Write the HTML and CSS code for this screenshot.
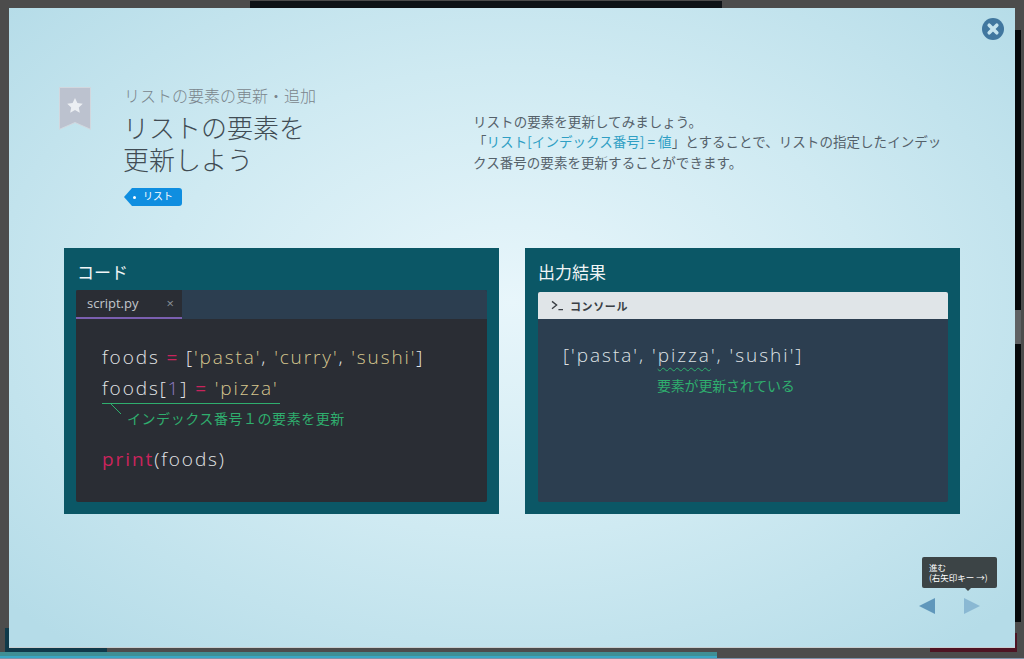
FILE: index.html

```html
<!DOCTYPE html>
<html lang="ja">
<head>
    <meta charset="UTF-8">
    <title>リストの要素を更新しよう</title>
    <link rel="stylesheet" href="styles.css">
</head>
<body>
    <!-- dimmed page behind the modal -->
    <div class="back-top"></div>
    <div class="back-right"></div>
    <div class="back-corner"></div>
    <div class="back-run"></div>
    <div class="back-progress"><div class="back-progress-fill"></div></div>

    <div class="modal">
        <svg class="close" viewBox="0 0 22 22">
            <circle cx="11" cy="11" r="11" fill="#41779f"/>
            <path d="M7.2 7.2l7.6 7.6M14.8 7.2l-7.6 7.6" stroke="#c4e3ee" stroke-width="3.6" stroke-linecap="round"/>
        </svg>

        <header class="head">
            <svg class="bookmark" viewBox="0 0 32 43">
                <path d="M.5.5h31v41.8l-15.500-6.800-15.500 6.800z" fill="#bcc2cf" stroke="#d2d7de"/>
                <path d="M16 11l2.400 5 5.400.7-4 3.700 1 5.400-4.800-2.700-4.800 2.700 1-5.400-4-3.700 5.400-.7z" fill="#eceff3"/>
            </svg>
            <div class="head-title">
                <p class="sub-title">リストの要素の更新・追加</p>
                <h1 class="title">リストの要素を<br>更新しよう</h1>
                <span class="tag"><i class="tag-dot"></i>リスト</span>
            </div>
            <p class="desc">
                リストの要素を更新してみましょう。<br>
                「<span class="desc-key">リスト[インデックス番号] = 値</span>」とすることで、リストの指定したインデッ<br>
                クス番号の要素を更新することができます。
            </p>
        </header>

        <div class="panels">
            <section class="panel">
                <h2 class="panel-title">コード</h2>
                <div class="editor">
                    <div class="tabs">
                        <div class="tab">script.py<span class="tab-close">×</span></div>
                    </div>
                    <div class="code">
                        <div class="line">foods <span class="red">=</span> [<span class="str">'pasta'</span>, <span class="str">'curry'</span>, <span class="str">'sushi'</span>]</div>
                        <div class="line line-mark">foods[<span class="num">1</span>] <span class="red">=</span> <span class="str">'pizza'</span></div>
                        <div class="note-code">
                            <svg class="note-tick" viewBox="0 0 12 12"><path d="M0 0l10 10" stroke="#2fae6e" stroke-width="1" fill="none"/></svg>
                            インデックス番号１の要素を更新
                        </div>
                        <div class="line"><span class="red">print</span>(foods)</div>
                    </div>
                </div>
            </section>

            <section class="panel">
                <h2 class="panel-title panel-title-output">出力結果</h2>
                <div class="console">
                    <div class="console-bar">
                        <svg class="prompt" viewBox="0 0 14 12"><path d="M1 1.500l5 4-5 4" stroke="#3a3f45" stroke-width="1.500" fill="none"/><path d="M8 10.500h5" stroke="#3a3f45" stroke-width="1.500"/></svg>
                        コンソール
                    </div>
                    <div class="output">
                        <div class="output-line">['pasta', '<span class="changed">pizza</span>', 'sushi']</div>
                        <div class="note-output">要素が更新されている</div>
                    </div>
                </div>
            </section>
        </div>

        <div class="tooltip">進む<br>(右矢印キー →)</div>
        <div class="nav">
            <span class="nav-prev"></span>
            <span class="nav-next"></span>
        </div>
    </div>
</body>
</html>
```

FILE: styles.css

```css
html, body {
    margin: 0;
    height: 100%;
}

body {
    position: relative;
    overflow: hidden;
    background-color: #4c4c4c;
    font-family: "Noto Sans CJK JP", "Noto Sans", sans-serif;
}

/* page behind the modal */
.back-top {
    position: absolute;
    left: 250px;
    top: 1px;
    width: 472px;
    height: 7px;
    background-color: #0e1317;
}

.back-right {
    position: absolute;
    left: 1015px;
    top: 30px;
    width: 6px;
    height: 592px;
    background: linear-gradient(#06090b 0, #06090b 280px, #5f6163 280px, #5f6163 314px, #06090b 314px);
}

.back-corner {
    position: absolute;
    left: 5px;
    top: 628px;
    width: 102px;
    height: 24px;
    background-color: #0f3a4a;
}

.back-run {
    position: absolute;
    left: 930px;
    top: 633px;
    width: 87px;
    height: 25px;
    background-color: #4e1423;
}

.back-progress {
    position: absolute;
    left: 0;
    right: 0;
    bottom: 0;
    height: 7px;
    background-color: #4c4c4c;
    border-bottom: 1px solid #7f93ab;
    box-sizing: border-box;
}

.back-progress-fill {
    width: 717px;
    height: 100%;
    background: linear-gradient(#3f8f95 70%, #39a7c4 70%);
}

/* modal */
.modal {
    position: absolute;
    left: 9px;
    top: 8px;
    width: 1006px;
    height: 639px;
    box-sizing: border-box;
    padding: 78px 55px 0;
    background: radial-gradient(ellipse 680px 450px at 50% 46%, #e8f6fb 0%, #cfeaf2 52%, #b5dce8 100%);
    box-shadow: 0 1px 0 #c9ced0;
}

.close {
    position: absolute;
    right: 11px;
    top: 10px;
    width: 22px;
    height: 22px;
}

.head {
    display: flex;
    height: 162px;
    margin-left: -5px;
}

.bookmark {
    width: 32px;
    height: 43px;
    margin: 1px 33px 0 0;
    flex-shrink: 0;
}

.head-title {
    width: 349px;
    margin: -1px 0 0 -1px;
    flex-shrink: 0;
}

.sub-title {
    margin: 0 0 0 1px;
    font-size: 16px;
    line-height: 20px;
    font-weight: 300;
    color: #7a858c;
}

.title {
    margin: 6px 0 13px;
    font-size: 26px;
    line-height: 32px;
    font-weight: 300;
    color: #414c54;
}

.tag {
    position: relative;
    display: block;
    width: 50px;
    height: 18px;
    margin-left: 9px;
    padding-left: 11px;
    box-sizing: border-box;
    border-radius: 0 3px 3px 0;
    background-color: #0f8ee0;
    color: #fff;
    font-size: 10px;
    line-height: 16px;
}

.tag::before {
    content: "";
    position: absolute;
    left: -8px;
    top: 0;
    border-style: solid;
    border-width: 9px 8px 9px 0;
    border-color: transparent #0f8ee0 transparent transparent;
}

.tag-dot {
    position: absolute;
    left: 1px;
    top: 8px;
    width: 3px;
    height: 3px;
    border-radius: 50%;
    background-color: #fff;
}

.desc {
    margin: 25px 0 0 1px;
    font-size: 13.5px;
    line-height: 20.4px;
    letter-spacing: 0.05px;
    color: #55616a;
    white-space: nowrap;
}

.desc-key {
    color: #2f9fc4;
}

.panels {
    display: flex;
    gap: 26px;
}

.panel {
    width: 435px;
    height: 266px;
    box-sizing: border-box;
    padding: 12px;
    background-color: #0b5766;
}

.panel-title {
    margin: 0 0 6px 1px;
    font-size: 17px;
    line-height: 24px;
    font-weight: 400;
    color: #f1f5f6;
}

.panel-title-output {
    margin-bottom: 8px;
}

.editor {
    height: 212px;
    border-radius: 2px;
    background-color: #2a2d34;
    overflow: hidden;
}

.tabs {
    height: 29px;
    background-color: #2c3e50;
}

.tab {
    display: flex;
    justify-content: space-between;
    align-items: center;
    width: 106px;
    height: 29px;
    box-sizing: border-box;
    padding: 0 8px 2px 11px;
    border-bottom: 2px solid #7a5fb0;
    background-color: #2a2d34;
    color: #c2c7cc;
    font-family: "Open Sans", sans-serif;
    font-size: 13px;
}

.tab-close {
    color: #8b9299;
    font-size: 13px;
}

.code {
    padding: 23px 26px 0;
}

.line {
    font-family: "Open Sans", sans-serif;
    font-size: 19px;
    line-height: 31px;
    letter-spacing: 1.9px;
    font-weight: 300;
    color: #e4e6e8;
}

.line-mark {
    width: 178px;
    height: 30px;
    border-bottom: 1px solid #2fae6e;
    white-space: nowrap;
}

.red {
    color: #c9245c;
    font-weight: 400;
}

.str {
    color: #d6c68e;
}

.num {
    color: #8f7cc4;
}

.note-code {
    position: relative;
    height: 40px;
    padding: 4px 0 0 25px;
    box-sizing: border-box;
    font-size: 14px;
    line-height: 20px;
    letter-spacing: 0.55px;
    color: #2fae6e;
}

.note-tick {
    position: absolute;
    left: 9px;
    top: 0;
    width: 12px;
    height: 12px;
}

.console {
    height: 210px;
    margin-left: 1px;
    border-radius: 2px;
    background-color: #2c3e50;
    overflow: hidden;
}

.console-bar {
    display: flex;
    align-items: center;
    gap: 6px;
    height: 27px;
    padding-left: 13px;
    background-color: #e0e5e8;
    color: #3a3f45;
    font-size: 11px;
    font-weight: 700;
    letter-spacing: 0.6px;
}

.prompt {
    width: 13px;
    height: 11px;
}

.output {
    padding: 21px 25px 0;
}

.output-line {
    font-family: "Open Sans", sans-serif;
    font-size: 19px;
    line-height: 30px;
    letter-spacing: 2px;
    font-weight: 300;
    color: #dfe3e6;
}

.changed {
    text-decoration: underline wavy #2fae6e 1px;
    text-underline-offset: 5px;
}

.note-output {
    margin: 5px 0 0 94px;
    font-size: 14px;
    line-height: 20px;
    letter-spacing: -0.2px;
    color: #2fae6e;
}

/* prev / next */
.tooltip {
    position: absolute;
    left: 913px;
    top: 549px;
    width: 75px;
    height: 31px;
    box-sizing: border-box;
    padding: 5px 0 0 7px;
    border-radius: 2px;
    background-color: #3c4446;
    color: #fff;
    font-size: 8.5px;
    line-height: 10px;
}

.tooltip::after {
    content: "";
    position: absolute;
    left: 43px;
    top: 31px;
    border-style: solid;
    border-width: 3px 3px 0;
    border-color: #3c4446 transparent transparent;
}

.nav {
    position: absolute;
    left: 910px;
    top: 590px;
    display: flex;
    gap: 29px;
}

.nav-prev, .nav-next {
    width: 0;
    height: 0;
    border-style: solid;
    border-width: 8.5px 0;
    border-color: transparent;
}

.nav-prev {
    border-right: 16px solid #6097bb;
}

.nav-next {
    border-left: 16px solid #8ab8d3;
}
```
